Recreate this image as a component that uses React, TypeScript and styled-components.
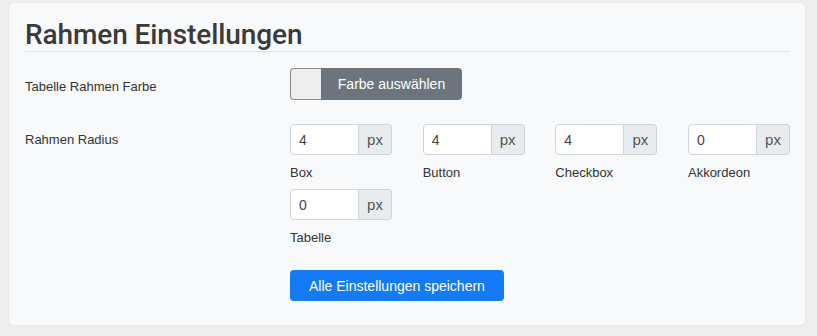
import React from 'react'
import styled, { createGlobalStyle } from 'styled-components'

const GlobalStyle = createGlobalStyle`
  body {
    margin: 0;
    padding: 3px 12px 11px 9px;
    background: #efefef;
    font-family: "Liberation Sans", Arial, sans-serif;
    color: #333;
  }
`

export const Card = styled.section`
  background-color: #f8f9fa;
  border-radius: 5px;
  box-shadow: 0 0 0 1px #e8e8e8, 0 1px 3px rgba(0, 0, 0, 0.06);
  padding: 15px 15px 24px 16px;
`

export const Title = styled.h3`
  margin: 0 0 16px 0;
  font-family: Roboto, "Liberation Sans", Arial, sans-serif;
  font-size: 28px;
  letter-spacing: -0.1px;
  font-weight: 500;
  line-height: 33px;
  color: #3a3a3a;
  border-bottom: 1px solid #dfe1e3;
`

export const FormRow = styled.div`
  display: grid;
  grid-template-columns: 265px 1fr;
  margin-bottom: 24px;
`

export const RowLabel = styled.label<{ offset: number }>`
  font-size: 13px;
  line-height: 20px;
  padding-top: ${props => props.offset}px;
  color: #333;
`

export const ColorGroup = styled.div`
  display: flex;
  height: 32px;
  width: 172px;
`

export const Swatch = styled.div`
  width: 30px;
  background: #eeeeee;
  border: 1px solid #8a8a8a;
  border-right: none;
  border-radius: 4px 0 0 4px;
`

export const GreyButton = styled.button`
  flex: 1;
  border: none;
  background: #6c757d;
  color: #fff;
  font-family: inherit;
  font-size: 14px;
  border-radius: 0 4px 4px 0;
  padding: 0 16px;
`

export const RadiusGrid = styled.div`
  display: flex;
  flex-wrap: wrap;
  justify-content: space-between;
  row-gap: 6px;
  width: 500px;
`

export const RadiusItem = styled.div`
  width: 102px;
`

export const InputGroup = styled.div`
  display: flex;
  height: 31px;
`

export const NumberInput = styled.input`
  width: 69px;
  box-sizing: border-box;
  border: 1px solid #ced4da;
  border-radius: 4px 0 0 4px;
  background: #fff;
  padding: 0 8px;
  font-family: inherit;
  font-size: 14px;
  color: #444;
  outline: none;
`

export const Addon = styled.span`
  flex: 1;
  display: flex;
  align-items: center;
  justify-content: center;
  background: #e9ecef;
  border: 1px solid #ced4da;
  border-left: none;
  border-radius: 0 4px 4px 0;
  font-size: 15px;
  color: #555;
`

export const SubLabel = styled.div`
  margin-top: 8px;
  font-size: 13px;
  line-height: 20px;
  color: #333;
`

export const SaveButton = styled.button`
  height: 31px;
  border: none;
  border-radius: 4px;
  background: #157af6;
  color: #fff;
  font-family: inherit;
  font-size: 14px;
  padding: 0 19px;
  cursor: pointer;
`

export const Actions = styled.div`
  padding-left: 265px;
  margin-top: -2px;
`

const radii = [
  { name: 'Box', value: '4' },
  { name: 'Button', value: '4' },
  { name: 'Checkbox', value: '4' },
  { name: 'Akkordeon', value: '0' },
  { name: 'Tabelle', value: '0' },
]

export default function App() {
  return (
    <>
      <GlobalStyle />
      <Card>
        <Title>Rahmen Einstellungen</Title>
        <FormRow>
          <RowLabel offset={9}>Tabelle Rahmen Farbe</RowLabel>
          <ColorGroup>
            <Swatch />
            <GreyButton>Farbe auswählen</GreyButton>
          </ColorGroup>
        </FormRow>
        <FormRow>
          <RowLabel offset={6}>Rahmen Radius</RowLabel>
          <RadiusGrid>
            {radii.map(r => (
              <RadiusItem key={r.name}>
                <InputGroup>
                  <NumberInput defaultValue={r.value} />
                  <Addon>px</Addon>
                </InputGroup>
                <SubLabel>{r.name}</SubLabel>
              </RadiusItem>
            ))}
          </RadiusGrid>
        </FormRow>
        <Actions>
          <SaveButton>Alle Einstellungen speichern</SaveButton>
        </Actions>
      </Card>
    </>
  )
}
